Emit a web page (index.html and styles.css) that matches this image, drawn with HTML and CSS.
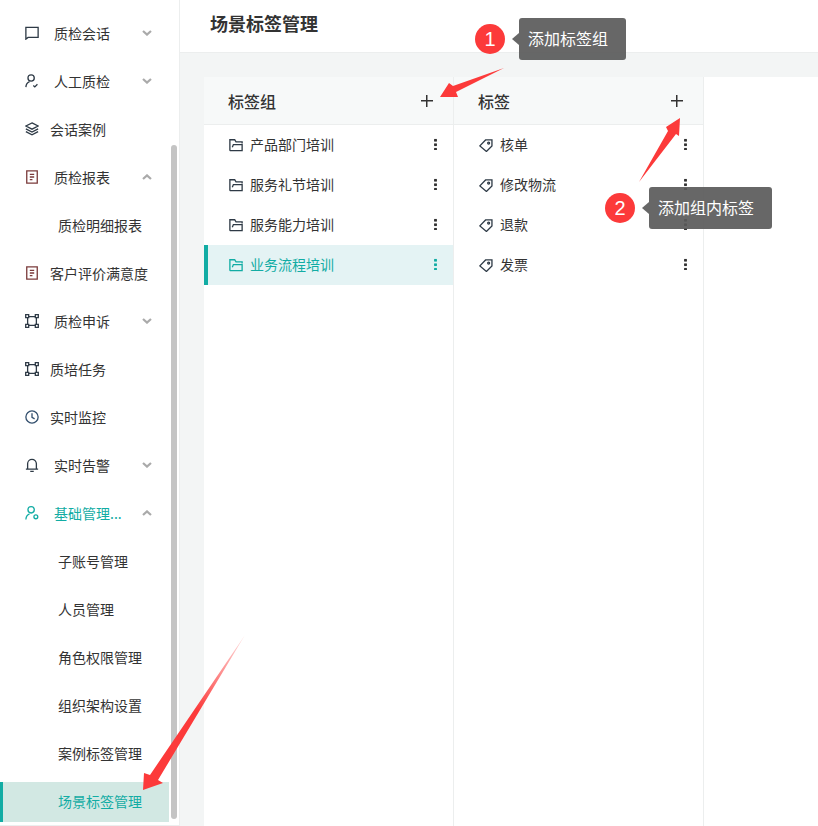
FILE: index.html
```html
<!DOCTYPE html>
<html lang="zh-CN">
<head>
  <meta charset="UTF-8" />
  <title>场景标签管理</title>
  <link rel="stylesheet" href="styles.css">
</head>
<body>
  <svg class="defs" width="0" height="0">
    <symbol id="i-chat" viewBox="0 0 16 16"><path d="M1 1.5h14v11.5H3.5L1 15z" /></symbol>
    <symbol id="i-person" viewBox="0 0 16 16"><circle cx="7" cy="4.6" r="3.6" /><path d="M1 15c.2-3.2 2-5.4 4.2-6.2M9.5 13.2l1.7 1.6 3-3" /></symbol>
    <symbol id="i-layers" viewBox="0 0 16 16"><path d="M8 1l7 3.6-7 3.6-7-3.6zM1 7.8l7 3.6 7-3.6M1 11l7 3.6 7-3.6" /></symbol>
    <symbol id="i-report" viewBox="0 0 16 16"><path d="M2 1h12v14H2zM5.5 5h5M5.5 8h5M5.5 11h3" /></symbol>
    <symbol id="i-nodes" viewBox="0 0 16 16"><path d="M3 3h10v10H3z" /><path class="box" d="M.8.8h3.4v3.4H.8zM11.8.8h3.4v3.4h-3.4zM.8 11.8h3.4v3.4H.8zM11.8 11.8h3.4v3.4h-3.4z" /></symbol>
    <symbol id="i-clock" viewBox="0 0 16 16"><circle cx="8" cy="8" r="7" /><path d="M8 3.6v4.8l3 1.8" /></symbol>
    <symbol id="i-bell" viewBox="0 0 16 16"><path d="M3 12.5V6.5a5 5 0 0 1 10 0v6M1 12.7h14M6 15.4h4" /></symbol>
    <symbol id="i-admin" viewBox="0 0 16 16"><circle cx="7" cy="4.4" r="3.6" /><path d="M1 15.4c.2-3.2 2-5.6 4.2-6.4" /><circle cx="12.4" cy="12.4" r="2.2" /></symbol>
    <symbol id="i-folder" viewBox="0 0 16 16"><path d="M1 14.5V2h5.5L8 4.5h7v1.8M1 14.5h14V7.5H5L3.8 10.5" /></symbol>
    <symbol id="i-tag" viewBox="0 0 16 16"><path d="M1 9l6.5-6.8h7.3v7l-6.3 6.2z" /><circle cx="11" cy="5.8" r="1.1" /></symbol>
    <symbol id="i-down" viewBox="0 0 10 6"><path d="M1 1l4 3.6L9 1" /></symbol>
    <symbol id="i-up" viewBox="0 0 10 6"><path d="M1 5l4-3.6L9 5" /></symbol>
  </svg>

  <aside class="sidebar">
    <nav class="nav">
      <a class="nav-item has-arrow"><svg class="icon"><use href="#i-chat" /></svg><span>质检会话</span><svg class="chevron"><use href="#i-down" /></svg></a>
      <a class="nav-item has-arrow"><svg class="icon"><use href="#i-person" /></svg><span>人工质检</span><svg class="chevron"><use href="#i-down" /></svg></a>
      <a class="nav-item"><svg class="icon"><use href="#i-layers" /></svg><span>会话案例</span></a>
      <a class="nav-item has-arrow"><svg class="icon icon-red"><use href="#i-report" /></svg><span>质检报表</span><svg class="chevron"><use href="#i-up" /></svg></a>
      <a class="nav-sub">质检明细报表</a>
      <a class="nav-item"><svg class="icon icon-red"><use href="#i-report" /></svg><span>客户评价满意度</span></a>
      <a class="nav-item has-arrow"><svg class="icon"><use href="#i-nodes" /></svg><span>质检申诉</span><svg class="chevron"><use href="#i-down" /></svg></a>
      <a class="nav-item"><svg class="icon"><use href="#i-nodes" /></svg><span>质培任务</span></a>
      <a class="nav-item"><svg class="icon icon-blue"><use href="#i-clock" /></svg><span>实时监控</span></a>
      <a class="nav-item has-arrow"><svg class="icon"><use href="#i-bell" /></svg><span>实时告警</span><svg class="chevron"><use href="#i-down" /></svg></a>
      <a class="nav-item has-arrow open"><svg class="icon"><use href="#i-admin" /></svg><span>基础管理...</span><svg class="chevron"><use href="#i-up" /></svg></a>
      <a class="nav-sub">子账号管理</a>
      <a class="nav-sub">人员管理</a>
      <a class="nav-sub">角色权限管理</a>
      <a class="nav-sub">组织架构设置</a>
      <a class="nav-sub">案例标签管理</a>
      <a class="nav-sub active">场景标签管理</a>
    </nav>
    <div class="scroll-thumb"></div>
  </aside>

  <main class="main">
    <header class="topbar">场景标签管理</header>
    <div class="content">
      <div class="board">
        <section class="column">
          <div class="column-head"><h2>标签组</h2><span class="plus"></span></div>
          <ul class="list">
            <li class="row"><svg class="icon"><use href="#i-folder" /></svg><span>产品部门培训</span><i class="more"></i></li>
            <li class="row"><svg class="icon"><use href="#i-folder" /></svg><span>服务礼节培训</span><i class="more"></i></li>
            <li class="row"><svg class="icon"><use href="#i-folder" /></svg><span>服务能力培训</span><i class="more"></i></li>
            <li class="row active"><svg class="icon"><use href="#i-folder" /></svg><span>业务流程培训</span><i class="more"></i></li>
          </ul>
        </section>
        <section class="column">
          <div class="column-head"><h2>标签</h2><span class="plus"></span></div>
          <ul class="list">
            <li class="row"><svg class="icon"><use href="#i-tag" /></svg><span>核单</span><i class="more"></i></li>
            <li class="row"><svg class="icon"><use href="#i-tag" /></svg><span>修改物流</span><i class="more"></i></li>
            <li class="row"><svg class="icon"><use href="#i-tag" /></svg><span>退款</span><i class="more"></i></li>
            <li class="row"><svg class="icon"><use href="#i-tag" /></svg><span>发票</span><i class="more"></i></li>
          </ul>
        </section>
      </div>
    </div>
  </main>

  <!-- annotations drawn on top of the screenshot -->
  <svg class="arrows" width="818" height="826" viewBox="0 0 818 826">
    <defs>
      <linearGradient id="fade" gradientUnits="userSpaceOnUse" x1="245" y1="635" x2="195" y2="710">
        <stop offset="0" stop-color="#fc3a3a" stop-opacity="0.15" />
        <stop offset="1" stop-color="#fc3a3a" />
      </linearGradient>
    </defs>
    <polygon fill="#fc3a3a" points="504,68 453,86 449,83 440,97 458,97 456,92" />
    <polygon fill="#fc3a3a" points="639,182 668,131 666,127 680,118 679,136 676,134" />
    <polygon fill="url(#fade)" points="245,635 150,775 144,773 143,790 163,783 158,780" />
  </svg>
  <div class="step step-one">1</div>
  <div class="tip tip-one">添加标签组</div>
  <div class="step step-two">2</div>
  <div class="tip tip-two">添加组内标签</div>
</body>
</html>
```

FILE: styles.css
```css
* {
  box-sizing: border-box;
}
html, body {
  margin: 0;
  height: 826px;
  overflow: hidden;
}
body {
  display: flex;
  position: relative;
  background-color: #fff;
  color: #333;
  font-family: "Noto Sans CJK SC", "Noto Sans", sans-serif;
  font-size: 14px;
}
.defs {
  position: absolute;
}
svg {
  fill: none;
  stroke: currentColor;
}
.box {
  fill: #fff;
}

/* sidebar */
.sidebar {
  position: relative;
  flex: none;
  width: 180px;
  height: 826px;
  border-right: 1px solid #eceeee;
  border-bottom: 1px solid #eceeee;
}
.nav {
  width: 169px;
  padding-top: 10px;
}
.nav-item {
  display: flex;
  align-items: center;
  height: 48px;
  padding: 0 17px 2px 25px;
}
.nav-item .icon {
  margin-right: 11px;
  color: #2e3a46;
}
.nav-item.has-arrow .icon {
  margin-right: 15px;
}
.nav-item .icon-red {
  color: #7b3b3b;
}
.nav-item .icon-blue {
  color: #34506e;
}
.nav-item.open,
.nav-item.open .icon {
  color: #12aca4;
}
.icon {
  flex: none;
  width: 14px;
  height: 14px;
  stroke-width: 1.5;
}
.chevron {
  width: 10px;
  height: 6px;
  margin-left: auto;
  color: #aaa;
  stroke-width: 2.2;
}
.nav-sub {
  display: flex;
  align-items: center;
  height: 48px;
  padding: 0 0 2px 58px;
}
.nav-sub.active {
  height: 40px;
  margin-top: 4px;
  background-color: #d2e8e3;
  border-left: 3px solid #12aca4;
  padding-left: 55px;
  color: #12aca4;
}
.scroll-thumb {
  position: absolute;
  top: 145px;
  left: 171px;
  width: 6px;
  height: 674px;
  border-radius: 3px;
  background-color: #c4c4c4;
}

/* main */
.main {
  flex: 1;
  display: flex;
  flex-direction: column;
  min-width: 0;
}
.topbar {
  flex: none;
  height: 53px;
  padding: 0 30px 6px;
  display: flex;
  align-items: center;
  border-bottom: 1px solid #eceeee;
  font-size: 18px;
  font-weight: 700;
}
.content {
  flex: 1;
  padding: 24px 0 0 24px;
  background-color: #f3f5f5;
}
.board {
  display: flex;
  height: 100%;
  background-color: #fff;
}
.column {
  flex: none;
  width: 250px;
  border-right: 1px solid #eceeee;
}
.column-head {
  display: flex;
  align-items: center;
  justify-content: space-between;
  height: 48px;
  padding: 0 20px 0 24px;
  background-color: #f7f9f9;
  border-bottom: 1px solid #eceeee;
}
.column-head h2 {
  margin: 0;
  font-size: 16px;
  font-weight: 500;
}
.plus {
  width: 12px;
  height: 12px;
  background:
    linear-gradient(#333, #333) center / 12px 1.5px no-repeat,
    linear-gradient(#333, #333) center / 1.5px 12px no-repeat;
}
.list {
  list-style: none;
  margin: 0;
  padding: 0;
}
.row {
  display: flex;
  align-items: center;
  height: 40px;
  padding: 0 16px 2px 24px;
}
.row .icon {
  margin-right: 7px;
  margin-left: 1px;
  margin-top: 2px;
  color: #2e3a46;
}
.row.active {
  padding-left: 20px;
  border-left: 4px solid #12aca4;
  background-color: #e4f3f4;
  color: #12aca4;
}
.row.active .icon {
  color: #12aca4;
}
.more {
  width: 3px;
  height: 12px;
  margin-left: auto;
  background: radial-gradient(circle, currentColor 1.3px, transparent 1.6px) center top / 3px 4.5px repeat-y;
}

/* annotations */
.arrows {
  position: absolute;
  top: 0;
  left: 0;
  stroke: none;
}
.step {
  position: absolute;
  width: 30px;
  height: 30px;
  border-radius: 50%;
  background-color: #fc3a3a;
  color: #fff;
  font-family: "Liberation Sans", sans-serif;
  font-size: 20px;
  line-height: 30px;
  text-align: center;
}
.step-one {
  top: 24px;
  left: 475px;
}
.step-two {
  top: 193px;
  left: 605px;
}
.tip {
  position: absolute;
  height: 42px;
  padding: 0 9px;
  border-radius: 3px;
  background-color: rgba(90, 90, 90, 0.92);
  color: #fff;
  font-size: 16px;
  line-height: 40px;
}
.tip::before {
  content: "";
  position: absolute;
  top: 15px;
  left: -7px;
  border-style: solid;
  border-width: 6px 7px 6px 0;
  border-color: transparent rgba(90, 90, 90, 0.92) transparent transparent;
}
.tip-one {
  top: 18px;
  left: 519px;
  width: 107px;
}
.tip-two {
  top: 187px;
  left: 649px;
  width: 123px;
}
```
